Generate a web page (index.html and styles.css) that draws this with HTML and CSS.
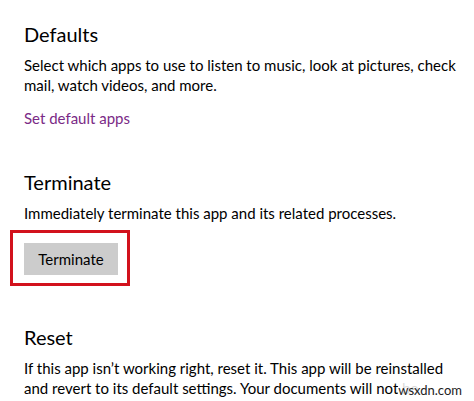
FILE: index.html
```html
<!DOCTYPE html>
<html lang="en">
<head>
<meta charset="utf-8">
<title>App settings</title>
<link rel="stylesheet" href="styles.css">
</head>
<body>
<main class="page">
  <section class="group">
    <h2 class="group-title">Defaults</h2>
    <p class="group-text">Select which apps to use to listen to music, look at pictures, check mail, watch videos, and more.</p>
    <a class="group-link" href="#">Set default apps</a>
  </section>
  <section class="group group-terminate">
    <h2 class="group-title">Terminate</h2>
    <p class="group-text">Immediately terminate this app and its related processes.</p>
    <div class="button-wrap">
      <button class="btn" type="button">Terminate</button>
      <span class="highlight"></span>
    </div>
  </section>
  <section class="group group-reset">
    <h2 class="group-title">Reset</h2>
    <p class="group-text">If this app isn’t working right, reset it. This app will be reinstalled and revert to its default settings. Your documents will not be affected.</p>
  </section>
</main>
<span class="watermark">wsxdn.com</span>
</body>
</html>
```
FILE: styles.css
```css
html, body {
  margin: 0;
  padding: 0;
  background: #ffffff;
  height: 401px;
  overflow: hidden;
}
body {
  position: relative;
  font-family: Lato, "Open Sans", "Liberation Sans", sans-serif;
  color: #000000;
}
.page {
  padding: 20px 0 0 24px;
  max-width: 440px;
}
.group-title {
  margin: 0;
  font-size: 20px;
  font-weight: 400;
  line-height: 28px;
}
.group-text {
  margin: 7px 0 0;
  font-size: 15px;
  line-height: 20px;
}
.group-link {
  display: block;
  margin-top: 13px;
  font-size: 15px;
  line-height: 20px;
  color: #7a2a86;
  text-decoration: none;
}
.group-terminate {
  margin-top: 40px;
}
.button-wrap {
  position: relative;
  width: max-content;
  margin-top: 20px;
}
.btn {
  display: block;
  width: 94px;
  height: 32px;
  padding: 0;
  border: 0;
  background: #cccccc;
  font-family: inherit;
  font-size: 15px;
  color: #000000;
}
.highlight {
  position: absolute;
  left: -14px;
  top: -13px;
  right: -12px;
  bottom: -11px;
  border: 3px solid #d2111c;
}
.group-reset {
  margin-top: 48px;
}
.watermark {
  position: absolute;
  right: 12px;
  bottom: 4px;
  font-size: 13px;
  line-height: 14px;
  color: #222222;
  background: rgba(255,255,255,0.85);
}
```
